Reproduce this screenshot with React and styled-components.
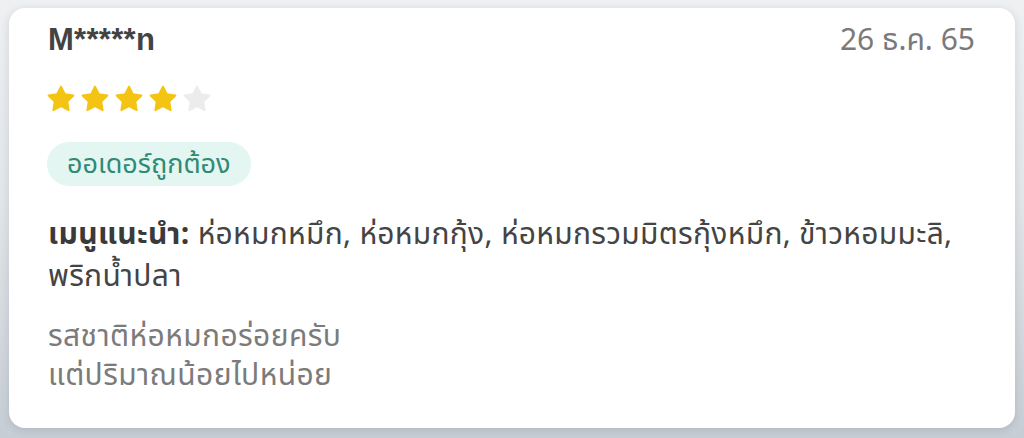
import React from "react";
import styled, { createGlobalStyle } from "styled-components";

const GlobalStyle = createGlobalStyle`
    html, body {
        margin: 0;
        padding: 0;
    }
    body {
        width: 1024px;
        height: 438px;
        overflow: hidden;
        background: linear-gradient(180deg, #eef0f2 0%, #e2e6e9 45%, #c6cdd4 100%);
        font-family: "Noto Sans Thai", "Noto Sans", "Liberation Sans", sans-serif;
    }
`;

const Page = styled.div`
    box-sizing: border-box;
    height: 438px;
    padding: 8px 9px 10px 9px;
`;

const Card = styled.div`
    box-sizing: border-box;
    height: 100%;
    background: #ffffff;
    border-radius: 16px;
    box-shadow: 0 2px 8px rgba(60, 70, 85, 0.16);
    padding: 14px 40px 0 39px;
    display: flex;
    flex-direction: column;
`;

const Header = styled.div`
    display: flex;
    justify-content: space-between;
    align-items: baseline;
    line-height: 36px;
`;

const Name = styled.div`
    font-family: "Liberation Sans", sans-serif;
    font-weight: 700;
    font-size: 31px;
    color: #434343;
    letter-spacing: 0.3px;
`;

const DateText = styled.div`
    font-size: 30px;
    color: #7a7a7a;
`;

const Stars = styled.div`
    display: flex;
    gap: 4px;
    margin: 26px 0 0 -2px;
`;

const Badge = styled.div`
    align-self: flex-start;
    margin: 29px 0 0 -1px;
    height: 44px;
    padding: 0 20px;
    border-radius: 22px;
    background: #e4f6f1;
    color: #2f8a76;
    font-size: 27px;
    display: flex;
    align-items: center;
`;

const Menu = styled.p`
    margin: 28px 0 0;
    font-size: 30px;
    line-height: 42px;
    letter-spacing: 0.3px;
    color: #444;
`;

const MenuLabel = styled.span`
    font-weight: 700;
    color: #3a3a3a;
`;

const Comment = styled.p`
    margin: 20px 0 0;
    font-size: 30px;
    line-height: 39px;
    letter-spacing: 0.4px;
    color: #7b7b7b;
`;

const Star = ({ filled }) => (
    <svg width="30" height="28" viewBox="0 0 30 28">
        <polygon
            points="15,1.6 18.88,9.26 27.36,10.58 21.28,16.64 22.64,25.12 15,21.2 7.36,25.12 8.72,16.64 2.64,10.58 11.12,9.26"
            fill={filled ? "#f4c414" : "#ececec"}
            stroke={filled ? "#f4c414" : "#ececec"}
            strokeWidth="2"
            strokeLinejoin="round"
        />
    </svg>
);

export default function App() {
    const rating = 4;
    return (
        <>
            <GlobalStyle />
            <Page>
                <Card>
                    <Header>
                        <Name>M*****n</Name>
                        <DateText>26 ธ.ค. 65</DateText>
                    </Header>
                    <Stars>
                        {[1, 2, 3, 4, 5].map((i) => (
                            <Star key={i} filled={i <= rating} />
                        ))}
                    </Stars>
                    <Badge>ออเดอร์ถูกต้อง</Badge>
                    <Menu>
                        <MenuLabel>เมนูแนะนำ:</MenuLabel> ห่อหมกหมึก, ห่อหมกกุ้ง,
                        ห่อหมกรวมมิตรกุ้งหมึก, ข้าวหอมมะลิ, พริกน้ำปลา
                    </Menu>
                    <Comment>
                        รสชาติห่อหมกอร่อยครับ
                        <br />
                        แต่ปริมาณน้อยไปหน่อย
                    </Comment>
                </Card>
            </Page>
        </>
    );
}
